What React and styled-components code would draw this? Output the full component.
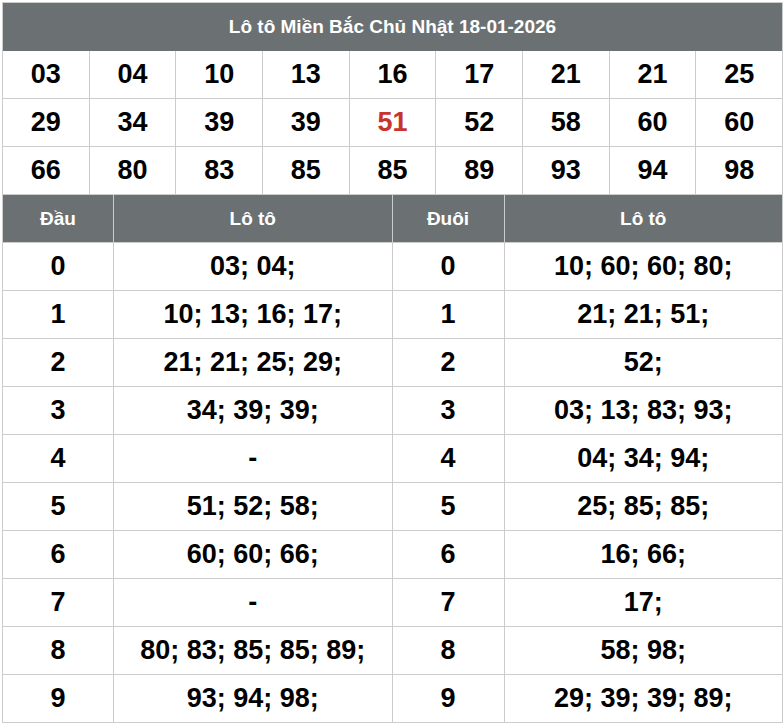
import React from 'react';
import styled, { createGlobalStyle } from 'styled-components';

const GlobalStyle = createGlobalStyle`
    body {
        margin: 0;
        background: #fff;
        font-family: "Liberation Sans", Arial, sans-serif;
    }
`;

const HEAD_BG = '#6b7172';
const LINE = '#cccccc';

const loto = [
    '03', '04', '10', '13', '16', '17', '21', '21', '25',
    '29', '34', '39', '39', '51', '52', '58', '60', '60',
    '66', '80', '83', '85', '85', '89', '93', '94', '98',
];

const special = '51';

const dauDuoi = [
    { dau: '03; 04;', duoi: '10; 60; 60; 80;' },
    { dau: '10; 13; 16; 17;', duoi: '21; 21; 51;' },
    { dau: '21; 21; 25; 29;', duoi: '52;' },
    { dau: '34; 39; 39;', duoi: '03; 13; 83; 93;' },
    { dau: '-', duoi: '04; 34; 94;' },
    { dau: '51; 52; 58;', duoi: '25; 85; 85;' },
    { dau: '60; 60; 66;', duoi: '16; 66;' },
    { dau: '-', duoi: '17;' },
    { dau: '80; 83; 85; 85; 89;', duoi: '58; 98;' },
    { dau: '93; 94; 98;', duoi: '29; 39; 39; 89;' },
];

const Wrapper = styled.div`
    margin: 2px 1px 0 2px;
    border-top: 1px solid ${LINE};
    border-left: 1px solid ${LINE};
`;

const NumberGrid = styled.div`
    display: grid;
    grid-template-columns: repeat(9, 1fr);
`;

const Title = styled.div`
    grid-column: 1 / -1;
    height: 48px;
    box-sizing: border-box;
    display: flex;
    align-items: center;
    justify-content: center;
    background: ${HEAD_BG};
    color: #fff;
    font-weight: bold;
    font-size: 19px;
    border-right: 1px solid ${LINE};
`;

const Cell = styled.div`
    height: 48px;
    box-sizing: border-box;
    display: flex;
    align-items: center;
    justify-content: center;
    border-right: 1px solid ${LINE};
    border-bottom: 1px solid ${LINE};
    font-weight: bold;
    font-size: 27px;
    color: ${props => props.red ? '#c8332d' : '#000'};
`;

const SplitGrid = styled.div`
    display: grid;
    grid-template-columns: 111px 1fr 112px 1fr;
`;

const HeadCell = styled.div`
    height: 48px;
    box-sizing: border-box;
    display: flex;
    align-items: center;
    justify-content: center;
    background: ${HEAD_BG};
    color: #fff;
    font-weight: bold;
    font-size: 19px;
    border-right: 1px solid ${LINE};
    border-bottom: 1px solid ${LINE};
`;

const App = () => (
    <>
        <GlobalStyle />
        <Wrapper>
            <NumberGrid>
                <Title>Lô tô Miền Bắc Chủ Nhật 18-01-2026</Title>
                {loto.map((n, i) => (
                    <Cell key={i} red={n === special}>{n}</Cell>
                ))}
            </NumberGrid>
            <SplitGrid>
                <HeadCell>Đầu</HeadCell>
                <HeadCell>Lô tô</HeadCell>
                <HeadCell>Đuôi</HeadCell>
                <HeadCell>Lô tô</HeadCell>
                {dauDuoi.map((row, i) => (
                    <React.Fragment key={i}>
                        <Cell>{i}</Cell>
                        <Cell>{row.dau}</Cell>
                        <Cell>{i}</Cell>
                        <Cell>{row.duoi}</Cell>
                    </React.Fragment>
                ))}
            </SplitGrid>
        </Wrapper>
    </>
);

export default App;
